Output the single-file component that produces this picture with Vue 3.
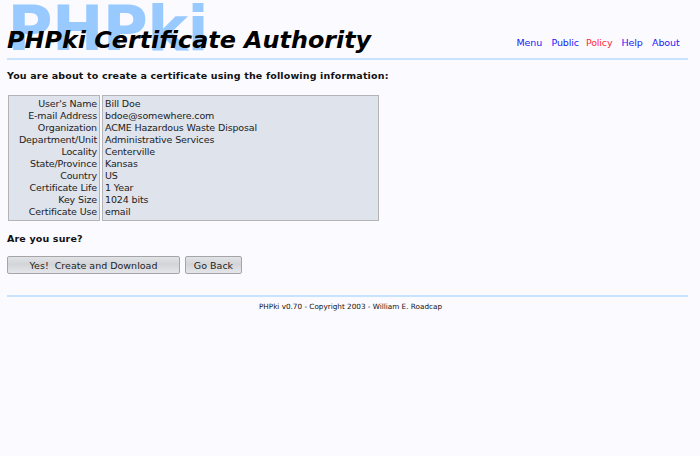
<script setup>
const links = [
  { label: 'Menu', cls: 'menu' },
  { label: 'Public', cls: 'public' },
  { label: 'Policy', cls: 'policy' },
  { label: 'Help', cls: 'help' },
  { label: 'About', cls: 'about' },
]
const fields = [
  ["User's Name", 'Bill Doe'],
  ['E-mail Address', 'bdoe@somewhere.com'],
  ['Organization', 'ACME Hazardous Waste Disposal'],
  ['Department/Unit', 'Administrative Services'],
  ['Locality', 'Centerville'],
  ['State/Province', 'Kansas'],
  ['Country', 'US'],
  ['Certificate Life', '1 Year'],
  ['Key Size', '1024 bits'],
  ['Certificate Use', 'email'],
]
</script>

<template>
  <div class="page">
    <header class="header">
      <div class="watermark">PHPki</div>
      <h1 class="title">PHPki Certificate Authority</h1>
      <nav class="nav">
        <a v-for="l in links" :key="l.label" :class="l.cls">{{ l.label }}</a>
      </nav>
    </header>
    <main>
      <h2 class="lead">You are about to create a certificate using the following information:</h2>
      <div class="info">
        <div class="cell labels">
          <div v-for="f in fields" :key="f[0]">{{ f[0] }}</div>
        </div>
        <div class="cell values">
          <div v-for="f in fields" :key="f[0]">{{ f[1] }}</div>
        </div>
      </div>
      <h2 class="sure">Are you sure?</h2>
      <div class="actions">
        <button class="yes">Yes!&nbsp; Create and Download</button>
        <button class="back">Go Back</button>
      </div>
    </main>
    <footer class="footer"><span>PHPki v0.70 - Copyright 2003 - William E. Roadcap</span></footer>
  </div>
</template>

<style>
body {
  background: #fbfaff;
}
</style>

<style scoped>
.page {
  box-sizing: border-box;
  height: 456px;
  padding: 0 12px 0 7px;
  background: #fbfaff;
  font-family: "DejaVu Sans", sans-serif;
  font-size: 9.5px;
  letter-spacing: -0.13px;
  color: #222;
  white-space: nowrap;
}
.header {
  position: relative;
  box-sizing: border-box;
  height: 60px;
  border-bottom: 2px solid #c8e3fe;
  display: flex;
  justify-content: space-between;
}
.watermark {
  position: absolute;
  left: 0.5px;
  top: 0;
  font-size: 61.5px;
  line-height: 59px;
  letter-spacing: -0.6px;
  font-weight: bold;
  color: #99caff;
}
.title {
  position: relative;
  margin: 26px 0 0;
  font-size: 23.85px;
  line-height: 28px;
  letter-spacing: 0;
  font-weight: bold;
  font-style: italic;
  color: #000;
}
.nav {
  display: flex;
  margin: 37px 8.5px 0 0;
  line-height: 12px;
  color: #2222f5;
}
.public { margin-left: 9.5px; }
.policy { margin-left: 7px; color: #ff2a35; }
.help { margin-left: 9px; }
.about { margin-left: 9.5px; }
.lead,
.sure {
  margin: 0;
  font-size: 9.5px;
  letter-spacing: 0.16px;
  line-height: 12px;
  font-weight: bold;
  color: #111;
}
.lead { padding-top: 10px; }
.info {
  display: flex;
  gap: 2px;
  margin: 13px 0 0 1px;
}
.cell {
  box-sizing: border-box;
  height: 126px;
  padding: 2px;
  border: 1px solid #b4b4b7;
  background: #dfe3ec;
  line-height: 12px;
}
.labels { width: 92px; text-align: right; }
.values { width: 277px; }
.sure { margin-top: 12px; }
.actions {
  display: flex;
  gap: 5px;
  margin-top: 11px;
}
button {
  box-sizing: border-box;
  height: 18px;
  padding: 0;
  border: 1px solid #a5a5a8;
  border-radius: 2px;
  background: linear-gradient(#e2e3e6 0, #d3d4d7 45%, #d8d9dc 60%, #e5e6e9 100%);
  font: inherit;
  font-size: 9.5px;
  letter-spacing: 0;
  color: #222;
}
.yes { width: 173px; }
.back { width: 57px; }
.footer {
  margin-top: 21px;
  border-top: 2px solid #c8e3fe;
  padding: 5px 0 0 6px;
  font-size: 7.25px;
  letter-spacing: 0;
  line-height: 10px;
  text-align: center;
  color: #111;
}
</style>
